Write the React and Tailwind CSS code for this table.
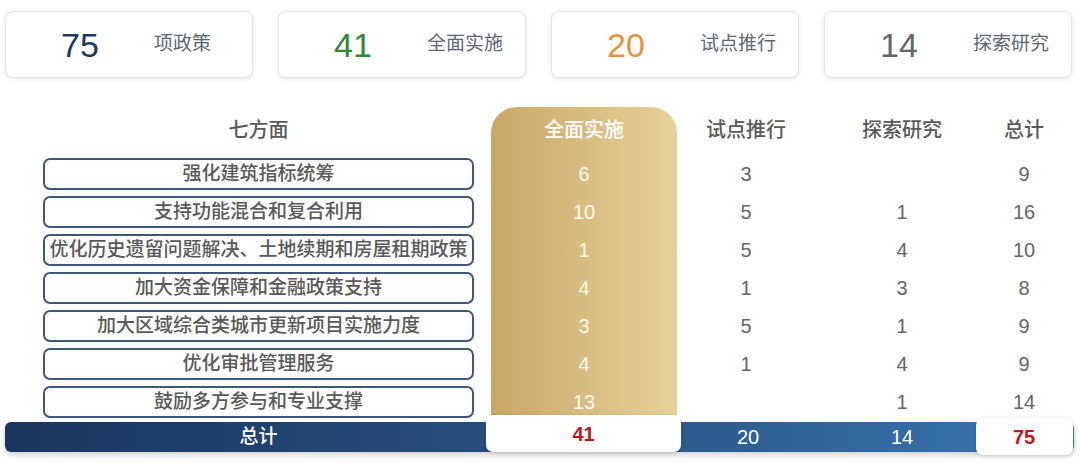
const font = { fontFamily: '"Liberation Sans", "Noto Sans CJK SC", sans-serif' };

const stats = [
  { value: 75, label: '项政策', color: 'text-[#1d3862]' },
  { value: 41, label: '全面实施', color: 'text-[#2f8a36]' },
  { value: 20, label: '试点推行', color: 'text-[#e8913a]' },
  { value: 14, label: '探索研究', color: 'text-[#666666]' },
];

const rows = [
  { name: '强化建筑指标统筹', full: 6, pilot: 3, explore: '', total: 9 },
  { name: '支持功能混合和复合利用', full: 10, pilot: 5, explore: 1, total: 16 },
  { name: '优化历史遗留问题解决、土地续期和房屋租期政策', full: 1, pilot: 5, explore: 4, total: 10 },
  { name: '加大资金保障和金融政策支持', full: 4, pilot: 1, explore: 3, total: 8 },
  { name: '加大区域综合类城市更新项目实施力度', full: 3, pilot: 5, explore: 1, total: 9 },
  { name: '优化审批管理服务', full: 4, pilot: 1, explore: 4, total: 9 },
  { name: '鼓励多方参与和专业支撑', full: 13, pilot: '', explore: 1, total: 14 },
];

function StatCard({ value, label, color }) {
  return (
    <div className="w-[248px] h-[67px] flex items-center bg-white border border-[#e4e4e4] rounded-lg shadow-[0_1px_4px_rgba(0,0,0,0.10)]">
      <div className={`w-[148px] text-center text-[34px] leading-none ${color}`}>{value}</div>
      <div className="text-[19px] text-[#5d6675]">{label}</div>
    </div>
  );
}

function NumCol({ width, title, values }) {
  return (
    <div className={`${width} flex flex-col gap-[6px]`}>
      <div className="h-[45px] flex items-center justify-center text-[20px] font-medium text-[#595959]">{title}</div>
      {values.map((v, i) => (
        <div key={i} className="h-[32px] flex items-center justify-center text-[20px] text-[#666]">{v}</div>
      ))}
    </div>
  );
}

export default function App() {
  return (
    <div className="w-[1080px] h-[465px] bg-white overflow-hidden" style={font}>
      {/* summary cards */}
      <div className="flex gap-[25px] px-[5px] pt-[11px]">
        {stats.map(s => <StatCard key={s.label} {...s} />)}
      </div>

      {/* table */}
      <div className="flex pl-[43px] mt-[29px]">
        <div className="w-[431px] flex flex-col gap-[6px]">
          <div className="h-[45px] flex items-center justify-center text-[20px] font-medium text-[#595959]">七方面</div>
          {rows.map(r => (
            <div key={r.name} className="h-[32px] flex items-center justify-center border-2 border-[#41567d] rounded-[7px] text-[19px] font-medium text-[#595959] whitespace-nowrap">
              {r.name}
            </div>
          ))}
        </div>
        <div className="w-[17px]" />
        <div className="w-[186px] flex flex-col gap-[6px] rounded-t-[26px] bg-gradient-to-r from-[#c9a766] to-[#e6d29a] pb-[4px]">
          <div className="h-[45px] flex items-center justify-center text-[20px] font-medium text-white">全面实施</div>
          {rows.map((r, i) => (
            <div key={i} className="h-[32px] flex items-center justify-center text-[20px] text-white/90">{r.full}</div>
          ))}
        </div>
        <NumCol width="w-[138px]" title="试点推行" values={rows.map(r => r.pilot)} />
        <NumCol width="w-[174px]" title="探索研究" values={rows.map(r => r.explore)} />
        <NumCol width="w-[70px]" title="总计" values={rows.map(r => r.total)} />
      </div>

      {/* total bar */}
      <div className="relative mx-[5px] w-[1069px] h-[30px] flex rounded-[6px] bg-gradient-to-r from-[#1a355f] via-[#28517f] to-[#3a77b3] shadow-[0_3px_6px_rgba(0,0,0,0.18)] pl-[38px]">
        <div className="w-[431px] flex items-center justify-center text-[19px] font-medium text-white">总计</div>
        <div className="w-[12px]" />
        <div className="w-[195px] h-[37px] self-end flex items-center justify-center bg-white rounded-[7px] shadow-[0_1px_4px_rgba(0,0,0,0.15)] text-[20px] font-semibold text-[#c3161c]">41</div>
        <div className="w-[134px] flex items-center justify-center text-[20px] text-white">20</div>
        <div className="w-[174px] flex items-center justify-center text-[20px] text-white">14</div>
        <div className="w-[70px] flex justify-center">
          <div className="w-[97px] shrink-0 h-[37px] self-end -mb-[3px] flex items-center justify-center bg-white rounded-[7px] shadow-[0_1px_4px_rgba(0,0,0,0.15)] text-[20px] font-semibold text-[#c3161c]">75</div>
        </div>
      </div>
    </div>
  );
}
